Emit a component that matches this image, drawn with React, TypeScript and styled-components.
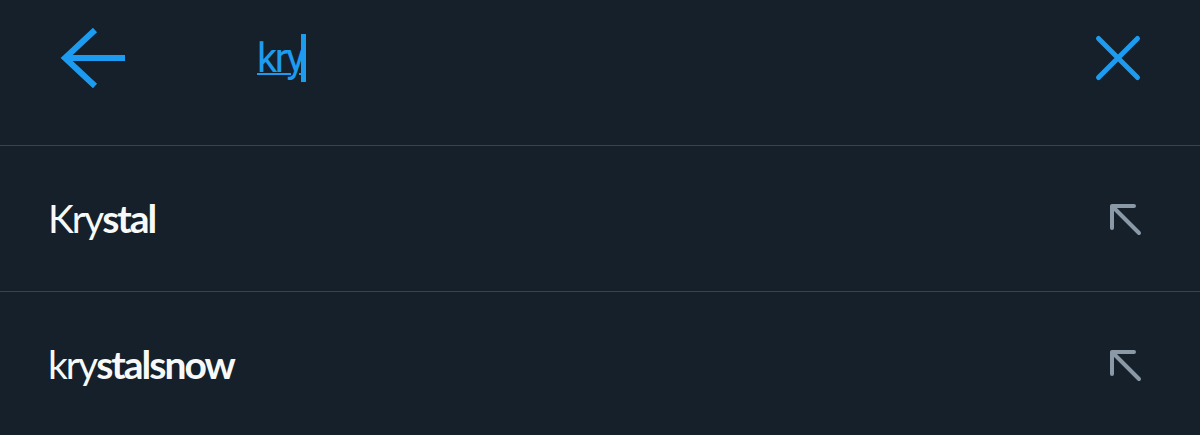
import React from 'react';
import styled, { createGlobalStyle } from 'styled-components';

const GlobalStyle = createGlobalStyle`
  html, body {
    margin: 0;
    padding: 0;
    background: #15202b;
  }
  * {
    box-sizing: border-box;
  }
`;

const SUGGESTIONS = ['Krystal', 'krystalsnow'];
const QUERY = 'kry';

const App = () => {
  return (
    <>
      <GlobalStyle />
      <Page>
        <Header>
          <IconButton aria-label="Back">
            <svg width="66" height="66" viewBox="0 0 66 66" fill="none">
              <path d="M65 33H5" stroke="#1d9bf0" strokeWidth="6" />
              <path d="M35 5L5 33L35 61" stroke="#1d9bf0" strokeWidth="6" />
            </svg>
          </IconButton>
          <SearchField>
            <Composing>{QUERY}</Composing>
            <Caret />
          </SearchField>
          <IconButton aria-label="Clear">
            <svg width="50" height="50" viewBox="0 0 50 50" fill="none">
              <path
                d="M5.5 5.5L44.5 44.5M44.5 5.5L5.5 44.5"
                stroke="#1d9bf0"
                strokeWidth="5"
                strokeLinecap="round"
              />
            </svg>
          </IconButton>
        </Header>
        {SUGGESTIONS.map((s) => (
          <Row key={s}>
            <Label>
              <Match>{s.slice(0, QUERY.length)}</Match>
              <Rest>{s.slice(QUERY.length)}</Rest>
            </Label>
            <FillIcon width="40" height="40" viewBox="0 0 40 40" fill="none">
              <path
                d="M8 7H30M8 7V29M8 7L35 34"
                stroke="#8b98a5"
                strokeWidth="4"
                strokeLinecap="round"
                strokeLinejoin="round"
              />
            </FillIcon>
          </Row>
        ))}
      </Page>
    </>
  );
};

const Page = styled.div`
  width: 1200px;
  height: 435px;
  overflow: hidden;
  background: #15202b;
  font-family: 'Lato', 'Noto Sans', sans-serif;
`;

const Header = styled.header`
  height: 146px;
  padding: 0 57px 29px 60px;
  display: flex;
  align-items: center;
  border-bottom: 1px solid #38444d;
`;

const IconButton = styled.button`
  display: flex;
  padding: 0;
  border: none;
  background: none;
`;

const SearchField = styled.div`
  flex: 1;
  display: flex;
  align-items: center;
  margin-left: 131px;
  font-family: 'Roboto', 'Liberation Sans', sans-serif;
  font-size: 40px;
  color: #1d9bf0;
`;

const Composing = styled.span`
  text-decoration: underline;
  text-decoration-thickness: 2px;
  letter-spacing: -2.5px;
`;

const Caret = styled.span`
  width: 5px;
  height: 48px;
  margin-left: -2px;
  background: #1d9bf0;
`;

const Row = styled.div`
  height: 146px;
  padding: 0 56px 2px 48px;
  display: flex;
  align-items: center;
  justify-content: space-between;
  border-bottom: 1px solid #38444d;
`;

const Label = styled.span`
  font-size: 39px;
  color: #f7f9f9;
  letter-spacing: -2px;
`;

const Match = styled.span`
  font-weight: 400;
`;

const Rest = styled.span`
  font-weight: 700;
`;

const FillIcon = styled.svg`
  display: block;
  margin-top: 2px;
`;

export default App;
